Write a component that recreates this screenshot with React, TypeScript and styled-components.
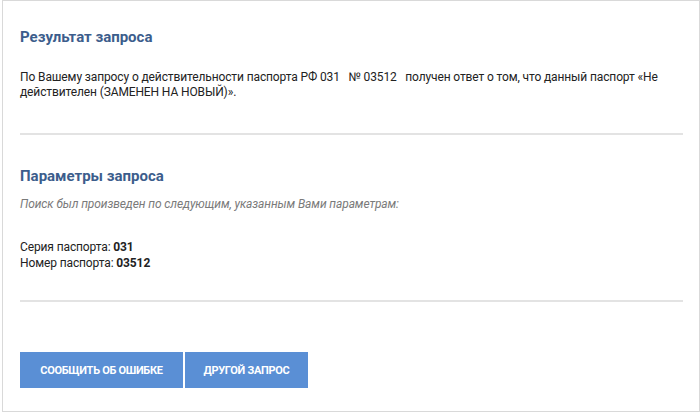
import React from "react";
import styled, { createGlobalStyle } from "styled-components";

const Global = createGlobalStyle`
  html, body { margin: 0; padding: 0; background: #ffffff; }
  body { font-family: Roboto, "Noto Sans", Arial, sans-serif; color: #222; }
`;

const Panel = styled.div`
  margin-left: 2px;
  border: 1px solid #d9d9d9;
  padding: 0 16px 0 17px;
  box-sizing: border-box;
  width: 698px;
  height: 412px;
`;

const Section = styled.section<{ $top: number; $bottom: number }>`
  padding-top: ${(p) => p.$top}px;
  padding-bottom: ${(p) => p.$bottom}px;
  border-bottom: 2px solid #e3e3e3;
`;

const Heading = styled.h2`
  margin: 0;
  font-size: 15px;
  line-height: 20px;
  font-weight: 700;
  color: #3c5d8c;
`;

const Paragraph = styled.p`
  margin: 23px 0 0;
  font-size: 12px;
  line-height: 15px;
  letter-spacing: -0.12px;
  color: #222;
`;

const Note = styled.p`
  margin: 11px 0 0;
  font-size: 12px;
  line-height: 15px;
  letter-spacing: -0.1px;
  font-style: italic;
  color: #7a7a7a;
`;

const Params = styled.div`
  margin-top: 27px;
  font-size: 12px;
  line-height: 16px;
  letter-spacing: -0.12px;
  color: #222;
`;

const Actions = styled.div`
  display: flex;
  gap: 2px;
  margin-top: 50px;
`;

const Button = styled.button<{ $w: number }>`
  width: ${(p) => p.$w}px;
  height: 36px;
  border: 0;
  background: #5a8fd5;
  color: #fff;
  font-family: Roboto, "Noto Sans", Arial, sans-serif;
  font-size: 11px;
  font-weight: 700;
  letter-spacing: -0.3px;
  text-transform: uppercase;
  padding: 0;
  cursor: pointer;
`;

export default function App() {
  return (
    <>
      <Global />
      <Panel>
        <Section $top={26} $bottom={33}>
          <Heading>Результат запроса</Heading>
          <Paragraph>
            По Вашему запросу о действительности паспорта РФ 031&nbsp;&nbsp; № 03512&nbsp;&nbsp; получен ответ о том, что данный паспорт «Не действителен (ЗАМЕНЕН НА НОВЫЙ)».
          </Paragraph>
        </Section>
        <Section $top={31} $bottom={29}>
          <Heading>Параметры запроса</Heading>
          <Note>Поиск был произведен по следующим, указанным Вами параметрам:</Note>
          <Params>
            <div>Серия паспорта: <b>031</b></div>
            <div>Номер паспорта: <b>03512</b></div>
          </Params>
        </Section>
        <Actions>
          <Button $w={163}>Сообщить об ошибке</Button>
          <Button $w={123}>Другой запрос</Button>
        </Actions>
      </Panel>
    </>
  );
}
